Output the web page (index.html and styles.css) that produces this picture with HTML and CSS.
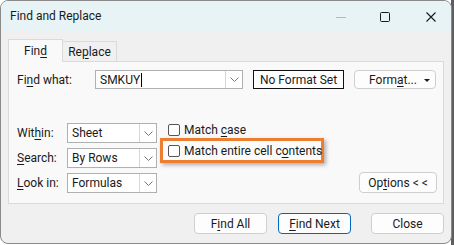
FILE: index.html
```html
<!DOCTYPE html>
<html lang="en">
<head>
    <meta charset="UTF-8">
    <title>Find and Replace</title>
    <link rel="stylesheet" href="styles.css">
</head>
<body>

    <div class="window">
        <div class="titlebar">
            <span class="title">Find and Replace</span>
            <div class="controls">
                <span class="ctl min"><svg width="12" height="12" viewBox="0 0 12 12"><line x1="1" y1="6.5" x2="11" y2="6.5" stroke="#b8b8b8" stroke-width="1"/></svg></span>
                <span class="ctl max"><svg width="12" height="12" viewBox="0 0 12 12"><rect x="1.5" y="1.5" width="9" height="9" rx="1" fill="none" stroke="#1a1a1a" stroke-width="1"/></svg></span>
                <span class="ctl close"><svg width="12" height="12" viewBox="0 0 12 12"><path d="M1.5 1.5 L10.5 10.5 M10.5 1.5 L1.5 10.5" stroke="#1a1a1a" stroke-width="1.1"/></svg></span>
            </div>
        </div>

        <div class="content">
            <div class="tabs">
                <div class="tab active"><span>Fin<u>d</u></span></div>
                <div class="tab"><span>Re<u>p</u>lace</span></div>
            </div>

            <div class="panel">
                <div class="find-row">
                    <label class="lbl find-lbl"><span>Fi<u>n</u>d what:</span></label>
                    <div class="combo find-combo">
                        <span class="combo-text">SMKUY<span class="caret"></span></span>
                        <span class="drop"><svg width="9" height="5" viewBox="0 0 9 5"><polyline points="0.5,0.5 4.5,4.5 8.5,0.5" fill="none" stroke="#777" stroke-width="1"/></svg></span>
                    </div>
                    <div class="nofmt">No Format Set</div>
                    <button class="btn fmt-btn">Form<u>a</u>t...<span class="tri"></span></button>
                </div>

                <div class="opts">
                    <div class="fields">
                        <label class="lbl"><span>Wit<u>h</u>in:</span></label>
                        <div class="combo">
                            <span class="combo-text">Sheet</span>
                            <span class="drop"><svg width="9" height="5" viewBox="0 0 9 5"><polyline points="0.5,0.5 4.5,4.5 8.5,0.5" fill="none" stroke="#777" stroke-width="1"/></svg></span>
                        </div>
                        <label class="lbl"><span><u>S</u>earch:</span></label>
                        <div class="combo">
                            <span class="combo-text">By Rows</span>
                            <span class="drop"><svg width="9" height="5" viewBox="0 0 9 5"><polyline points="0.5,0.5 4.5,4.5 8.5,0.5" fill="none" stroke="#777" stroke-width="1"/></svg></span>
                        </div>
                        <label class="lbl"><span><u>L</u>ook in:</span></label>
                        <div class="combo">
                            <span class="combo-text">Formulas</span>
                            <span class="drop"><svg width="9" height="5" viewBox="0 0 9 5"><polyline points="0.5,0.5 4.5,4.5 8.5,0.5" fill="none" stroke="#777" stroke-width="1"/></svg></span>
                        </div>
                    </div>

                    <div class="checks">
                        <div class="check case-check"><span class="box"></span><span>Match <u>c</u>ase</span></div>
                        <div class="highlight">
                            <div class="check"><span class="box"></span><span>Match entire cell c<u>o</u>ntents</span></div>
                        </div>
                    </div>

                    <div class="right">
                        <button class="btn opt-btn">Op<u>t</u>ions &lt; &lt;</button>
                    </div>
                </div>
            </div>

            <div class="actions">
                <button class="btn act">F<u>i</u>nd All</button>
                <button class="btn act primary"><u>F</u>ind Next</button>
                <button class="btn act close-btn">Close</button>
            </div>
        </div>
    </div>

</body>
</html>
```

FILE: styles.css
```css
body {
    margin: 0;
    font-family: Roboto, "Noto Sans", Arial, sans-serif;
    font-size: 12px;
    color: #1a1a1a;
    background: linear-gradient(to right, #ffffff 451px, #5e5e5e 451px);
}
u {
    text-underline-offset: 2px;
}
.window {
    width: 452px;
    height: 244px;
    box-sizing: border-box;
    border: 1px solid #8a8a8a;
    border-radius: 8px;
    background-color: #f0f0f0;
    overflow: hidden;
}
.titlebar {
    height: 31px;
    background-color: #e8f3f6;
    display: flex;
    align-items: center;
    justify-content: space-between;
}
.title {
    margin-left: 9px;
    font-size: 12px;
    margin-top: -1px;
}
.controls {
    display: flex;
    align-items: center;
    margin-right: 14px;
}
.ctl {
    display: flex;
    width: 12px;
    height: 12px;
}
.min {
    margin-right: 32px;
}
.max {
    margin-right: 34px;
}
.content {
    padding: 7px 7px 0 7px;
}
.tabs {
    display: flex;
    align-items: flex-end;
    height: 22px;
}
.tab {
    box-sizing: border-box;
    height: 20px;
    width: 54px;
    border: 1px solid #dadada;
    border-bottom: none;
    display: flex;
    align-items: center;
    justify-content: center;
    background-color: #f0f0f0;
    position: relative;
    white-space: nowrap;
}
.tab.active {
    width: 55px;
    height: 23px;
    background-color: #f9f9f9;
    margin-bottom: -1px;
    z-index: 1;
    padding-bottom: 1px;
}
.tab + .tab {
    border-left: none;
}
.panel {
    box-sizing: border-box;
    width: 436px;
    height: 143px;
    border: 1px solid #dadada;
    background-color: #f9f9f9;
    padding: 8px 6px 0 8px;
}
.find-row {
    display: flex;
    align-items: center;
    height: 19px;
}
.find-lbl {
    width: 78px;
}
.lbl {
    display: flex;
    align-items: center;
    white-space: nowrap;
}
.combo {
    box-sizing: border-box;
    display: flex;
    height: 20px;
    width: 90px;
    border: 1px solid #b0b0b0;
    background-color: #fff;
}
.find-combo {
    width: 148px;
    height: 19px;
}
.combo-text {
    flex: 1;
    display: flex;
    align-items: center;
    padding-left: 4px;
    white-space: nowrap;
}
.caret {
    display: inline-block;
    width: 1px;
    height: 14px;
    background-color: #000;
    margin-left: 1px;
}
.drop {
    width: 16px;
    border-left: 1px solid #d6d6d6;
    display: flex;
    align-items: center;
    justify-content: center;
}
.nofmt {
    box-sizing: border-box;
    margin-left: 10px;
    width: 91px;
    height: 19px;
    border: 1.5px solid #111;
    background-color: #fff;
    display: flex;
    align-items: center;
    justify-content: center;
    white-space: nowrap;
}
.btn {
    font-family: inherit;
    font-size: 12px;
    color: #1a1a1a;
    background-color: #fdfdfd;
    border: 1px solid #cfcfcf;
    border-radius: 4px;
    padding: 0;
    box-sizing: border-box;
    white-space: nowrap;
}
.fmt-btn {
    margin-left: 10px;
    width: 82px;
    height: 19px;
    position: relative;
    padding-right: 4px;
}
.tri {
    position: absolute;
    right: 5px;
    top: 8px;
    border-left: 3px solid transparent;
    border-right: 3px solid transparent;
    border-top: 3px solid #1a1a1a;
}
.opts {
    display: flex;
    margin-top: 34px;
}
.fields {
    display: grid;
    grid-template-columns: 50px 90px;
    grid-auto-rows: 20px;
    row-gap: 5px;
}
.checks {
    margin-left: 3px;
}
.check {
    display: flex;
    align-items: center;
    height: 13px;
    white-space: nowrap;
}
.box {
    box-sizing: border-box;
    width: 12px;
    height: 12px;
    border: 1px solid #555;
    border-radius: 2px;
    background-color: #fff;
    margin-right: 4px;
    flex-shrink: 0;
}
.case-check {
    margin-left: 8px;
}
.highlight {
    box-sizing: border-box;
    margin-top: 2px;
    width: 164px;
    height: 25px;
    border: 3px solid #ed7d31;
    background-color: #fbfbfb;
    box-shadow: 2px 2px 4px rgba(0, 0, 0, 0.3);
    padding: 3px 0 0 5px;
}
.right {
    flex: 1;
    display: flex;
    justify-content: flex-end;
    align-items: flex-end;
}
.opt-btn {
    width: 78px;
    height: 21px;
}
.actions {
    display: flex;
    justify-content: flex-end;
    margin-top: 9px;
}
.act {
    width: 73px;
    height: 21px;
}
.primary {
    margin-left: 11px;
    border-color: #0067c0;
}
.close-btn {
    margin-left: 20px;
}
```
